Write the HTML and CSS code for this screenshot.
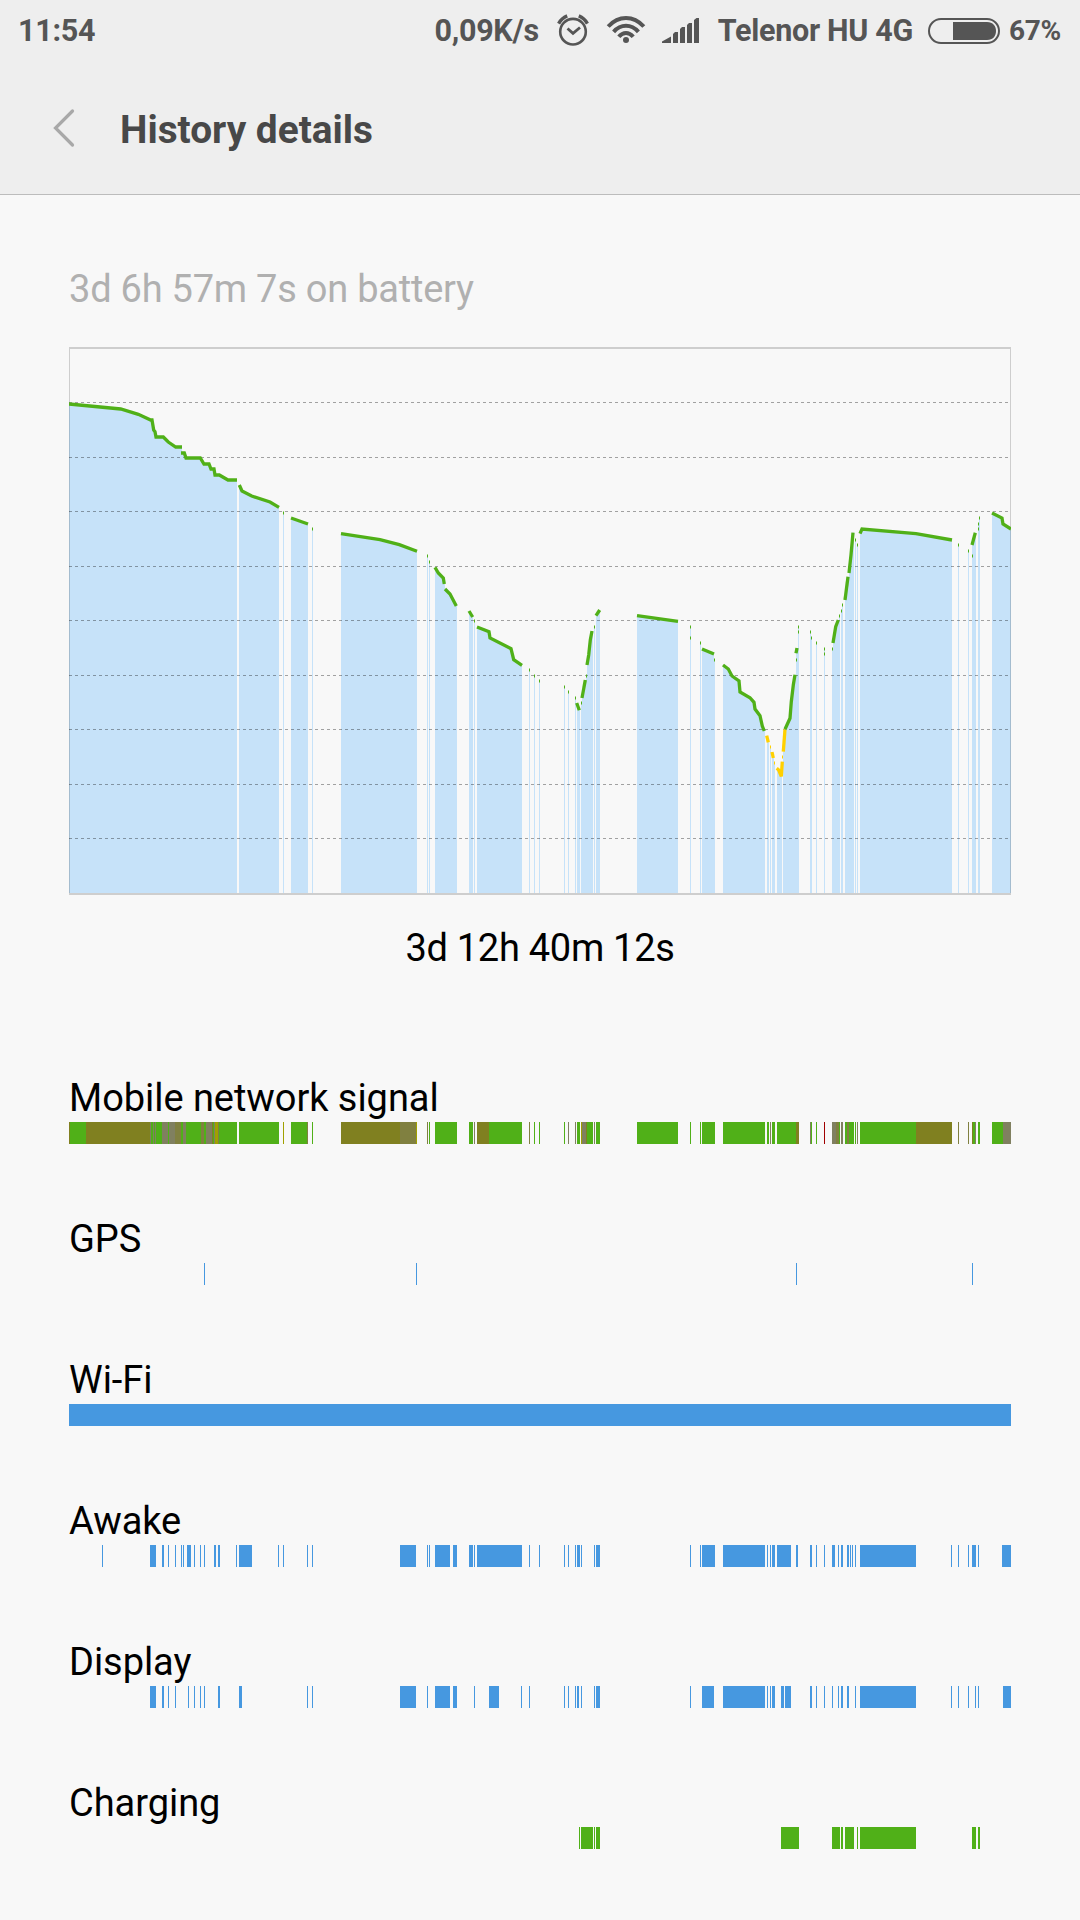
FILE: index.html
```html
<!DOCTYPE html>
<html lang="en">
<head>
<meta charset="utf-8">
<title>History details</title>
<link rel="stylesheet" href="styles.css">
</head>
<body>
<header class="top">
  <div class="status">
    <span class="clock">11:54</span>
    <span class="speed">0,09K/s</span>
    <svg class="alarm" width="34" height="34" viewBox="556 12 34 34" fill="none" stroke="#555">
      <circle cx="573" cy="30.7" r="12.8" stroke-width="2.6"/>
      <path d="M567.5 27.5L573 32.3L580 26.5" stroke-width="2.8"/>
      <path d="M558.6 22.6Q561.5 17.3 567.2 14.9M587.4 22.6Q584.5 17.3 578.8 14.9" stroke-width="3.4"/>
    </svg>
    <svg class="wifi" width="40" height="30" viewBox="606 15 40 30" fill="none" stroke="#555" stroke-width="4">
      <path d="M608.2 26.5Q616 18 626 18Q636 18 643.8 26.5M613.6 31.8Q619 25.7 626 25.7Q633 25.7 638.4 31.8M618.8 36.8Q622 33 626 33Q630 33 633.2 36.8"/>
      <circle cx="626" cy="40" r="3" fill="#555" stroke="none"/>
    </svg>
    <svg class="signal" width="38" height="26" viewBox="663 17 38 26" fill="#555">
      <path d="M663 43V41.5L672 36.5V43ZM674 43V34L676 32H679V43ZM681 43V29L683 27H686V43ZM688 43V25L690 23H693V43ZM695 43V20L697.500 18H700V43Z"/>
    </svg>
    <span class="carrier">Telenor HU 4G</span>
    <svg class="battery" width="72" height="26" viewBox="0 0 72 26">
      <rect x="1" y="1" width="70" height="24" rx="12" fill="none" stroke="#555" stroke-width="2"/>
      <path d="M25 4H59C65 4 68 8 68 13S65 22 59 22H25Z" fill="#555"/>
    </svg>
    <span class="percent">67%</span>
  </div>
  <div class="titlebar">
    <svg class="back" width="24" height="40" viewBox="0 0 24 40"><path d="M20.500 3L3.500 20L20.500 37" fill="none" stroke="#a8a8a8" stroke-width="3.200" stroke-linecap="round"/></svg>
    <h1>History details</h1>
  </div>
</header>
<main>
  <p class="since">3d 6h 57m 7s on battery</p>
  <svg id="chart" class="chart" width="942" height="548" viewBox="69 347 942 548"></svg>
  <p class="duration">3d 12h 40m 12s</p>
  <section class="track"><h2>Mobile network signal</h2><svg id="network" width="942" height="22" viewBox="69 0 942 22"></svg></section>
  <section class="track"><h2>GPS</h2><svg id="gps" width="942" height="22" viewBox="69 0 942 22"></svg></section>
  <section class="track"><h2>Wi-Fi</h2><svg id="wlan" width="942" height="22" viewBox="69 0 942 22"></svg></section>
  <section class="track"><h2>Awake</h2><svg id="awake" width="942" height="22" viewBox="69 0 942 22"></svg></section>
  <section class="track"><h2>Display</h2><svg id="display" width="942" height="22" viewBox="69 0 942 22"></svg></section>
  <section class="track"><h2>Charging</h2><svg id="charging" width="942" height="22" viewBox="69 0 942 22"></svg></section>
</main>
<script src="script.js"></script>
</body>
</html>
```

FILE: styles.css
```css
* { box-sizing: border-box; }
body {
  margin: 0;
  width: 1080px;
  height: 1920px;
  overflow: hidden;
  background: #f8f8f8;
  color: #000;
  font-family: Roboto, sans-serif;
}
h1, h2, p { margin: 0; font-weight: 400; }
svg { display: block; flex: none; }
.top {
  height: 195px;
  background: #eee;
  border-bottom: 1px solid #bcbcbc;
}
.status {
  display: flex;
  align-items: center;
  height: 60px;
  padding: 0 19px 0 18px;
  color: #555;
  font-size: 30.5px;
  font-weight: 700;
  letter-spacing: -0.3px;
  line-height: 60px;
  white-space: nowrap;
}
.status span { padding-top: 2px; }
.speed { margin-left: auto; }
.alarm { margin-left: 17px; }
.wifi { margin-left: 16px; }
.signal { margin-left: 16px; }
.carrier { margin-left: 18px; }
.battery { margin: 1px 0 0 15px; }
.percent { margin-left: 9px; font-size: 28px; }
.titlebar {
  display: flex;
  align-items: center;
  height: 136px;
  padding: 0 0 0 52px;
}
h1 {
  margin-left: 44px;
  padding-top: 3px;
  color: #484848;
  font-size: 38.8px;
  font-weight: 700;
  line-height: 136px;
}
main { padding: 64px 69px 0; }
.since {
  height: 88px;
  color: #b0b0b0;
  font-size: 38px;
  letter-spacing: -0.23px;
  line-height: 60px;
}
.duration {
  height: 169px;
  font-size: 38px;
  letter-spacing: -0.28px;
  line-height: 106px;
  text-align: center;
}
.track { height: 141px; }
.track h2 {
  height: 58px;
  font-size: 38px;
  letter-spacing: -0.05px;
  line-height: 68px;
}
```

FILE: script.js
```js
const NS = 'http://www.w3.org/2000/svg';
const GREEN = '#50b018', YELLOW = '#ffd000', BLUE = '#4698e0', AREA = '#c6e2f9';
const BOTTOM = 893;

function add(svg, tag, attrs) {
  const el = document.createElementNS(NS, tag);
  for (const key in attrs) el.setAttribute(key, attrs[key]);
  svg.appendChild(el);
}

// Battery level runs: [start x, end x, level points inside the run]
const runs = [
  [69, 182, '69,404 120.7,409 138.3,414.3 150.7,420 152,420 153.7,430 155,431.7 156,437 163.3,437 168.3,442 175.7,447 182,447'],
  [181, 237, '181,453 184.3,453 186,458 200.3,458 204,464 209,464 211,469 214,469 215,475 219.3,475 228,480 237,480'],
  [239, 279, '239.3,485 242,491 251.7,496 270,502 279,507.3'],
  [291, 308, '291,518 308,524'],
  [341, 417, '341,533.7 380,539.7 399.3,544.7 417,551.3'],
  [435, 445, '435,567.3 438.3,573 443.3,578 444.3,584'],
  [445, 457, '445,589 450,594 456.3,606'],
  [469, 473, '469,611 472.7,617'],
  [477, 522, '477,627 489,631.7 490,638 511,648.7 513.7,659.7 522,665.3'],
  [577, 580, '576.7,703 579.3,710.3'],
  [582, 586, '582,698 585.3,680'],
  [587, 593, '587,665 588.7,655 590.3,640 592,631'],
  [596, 600, '596,615.7 599.7,610'],
  [637, 678, '637,615.7 678,621.3'],
  [702, 714, '702,649 714,654'],
  [723, 765, '723,665 728.3,669 732,676 739,681 740,692 750,697.7 754,702.3 755,709 760,715.7 762.3,726 764.3,731'],
  [767, 769, '766.7,735.7 768.3,742.3', YELLOW],
  [772, 774, '772,752 773.3,758', YELLOW],
  [777, 782, '776.7,768.3 778.7,770 781.3,776.3 782.3,761.7', YELLOW],
  [783, 785, '783.3,751.7 785,729.3', YELLOW],
  [785, 796, '785,729.3 790,718.3 791.3,701.7 793.3,685 795,674.7'],
  [796, 798, '796,653.3 797,648'],
  [833, 839, '833,643 835.7,626.7 838.3,620'],
  [845, 849, '845,600 848,576.7'],
  [849, 854, '849,573 851,555 853,532.7'],
  [860, 952, '860,533.7 862,529 916,533.7 952,540'],
  [972, 976, '972,545 975.3,532.7'],
  [992, 1011, '992,513 1002,518 1003,524 1011,529'],
];

// Single-pixel samples: [x, level y]
const ticks = [
  [283, 513], [312, 529], [427, 556], [429, 562], [474, 621], [529, 670], [534, 676], [539, 681],
  [564, 687], [568, 692], [575, 698], [581, 703], [586, 676], [594, 627], [690, 627], [690, 638],
  [700, 643], [714, 660], [770, 747, YELLOW], [774, 763, YELLOW], [782, 757, YELLOW], [796, 660],
  [798, 627], [798, 632], [810, 632], [811, 638], [816, 643], [824, 649], [824, 654], [832, 649],
  [839, 616], [841, 611], [842, 605], [855, 540], [857, 545], [958, 545], [968, 551], [972, 556],
  [978, 524], [978, 529], [979, 518],
];

const chart = document.getElementById('chart');
for (const [x0, x1, pts] of runs) {
  const list = pts.split(' ');
  const first = list[0].split(',')[1];
  add(chart, 'path', { d: `M${x0} ${BOTTOM}V${first}L${list.join('L')}H${x1}V${BOTTOM}Z`, fill: AREA });
}
for (const [x, y] of ticks) {
  const covered = [972, 796, 782].includes(x);
  if (!covered) add(chart, 'rect', { x, y, width: 1, height: BOTTOM - y, fill: AREA });
}
for (let i = 0; i < 9; i++) {
  const y = Math.floor(402 + i * 54.5) + 0.5;
  add(chart, 'path', { d: `M69 ${y + (i % 2)}H1011`, stroke: '#000', 'stroke-opacity': 0.35, 'stroke-dasharray': '3 3' });
}
add(chart, 'rect', { x: 69, y: 348, width: 942, height: 546, fill: 'none', stroke: '#000', 'stroke-opacity': 0.17, 'stroke-width': 2 });
for (const [, , pts, color] of runs) {
  add(chart, 'polyline', { points: pts, fill: 'none', stroke: color || GREEN, 'stroke-width': 3.3 });
}
for (const [x, y, color] of ticks) {
  add(chart, 'rect', { x, y: y - 1.5, width: 1, height: 3, fill: color || GREEN });
}

// Track bars: "x", "x,width" or "x,width,color key"
const shades = { g: GREEN, o: '#808020', m: '#808040', s: '#808060', y: '#a0a000', r: '#a00000' };
function track(id, fill, data) {
  const svg = document.getElementById(id);
  for (const item of data.split(' ')) {
    const [x, width = 1, key] = item.split(',');
    add(svg, 'rect', { x, y: 0, width, height: 22, fill: key ? shades[key] : fill });
  }
}

track('network', GREEN, '69,1,o 70,16 86,64,o 150,1,s 151,2 153,1,s 154,1 155,1,s 156,6 162,6,s 168,1 169,6,s 175,6,m 181,2 183,3,s 186,15 201,3,m 204,2 206,6,s 212,1,o 213,1 214,1,s 215,3,y 218,1,m 219,18 239,40 283,1,y 291,16 307,1,m 312 341,59,o 400,16,m 416,1,y 427,1,m 429 435,22 469,4 474,1,s 477,12,o 489,33 529,1,m 534 539 564 568,1,s 575,1,s 577,3 581,1,y 582,4,s 586,1,o 587,6 594,1,s 596,4 637,41 690 700 702,13 723,42 767,2 770,1,s 772,3 777,19 796,3,o 810,1,s 811 816 824,1,r 832,4,s 836,3,m 839,1 841,2,s 845,2 847,2,m 849,5 855 857,1,s 860,56 916,36,o 958,1,m 968,1,m 972,1,o 973,2 975,1,s 978,2 992,11 1003,8,s');
track('gps', BLUE, '204 416 796 972');
track('wlan', BLUE, '69,942');
track('awake', BLUE, '102 150,6 162,2 168 175 181 183 187,4 194 200 204 214,2 218,2 236 239,13 278 283 307 312 400,16 427 429 435,15 453,4 469,4 474 477,45 529 539 564 568 575 577,3 581 594 596,4 690 700 702,13 723,42 767 770 772,3 777,14 796,2 810,2 816 824 832,3 838 841,2 847,2 850 852 855 860,56 951 958 968 972,4 978 1002,9');
track('display', BLUE, '150,6 162,2 168 175 188 194 200 204 218,2 239,3 307 312 400,16 427 435,15 453,4 474 489,10 521 529 564 568 575 577,2 581 594 596,4 690 702,12 723,42 767 770 772,3 781,3 785,6 810,2 816 824 832 838 841,2 847,2 855 860,56 951 958 968 975 978 1003,8');
track('charging', GREEN, '579 581,12 594 596,4 781,18 832,8 841,2 845,9 857 860,56 972,4 978,2');
```
